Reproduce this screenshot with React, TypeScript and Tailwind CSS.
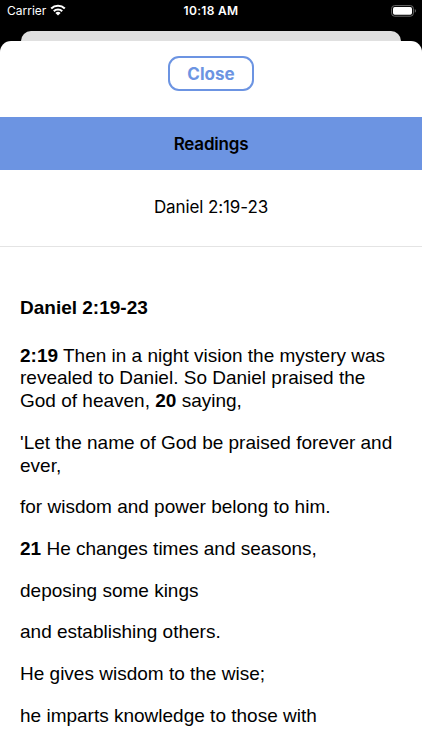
import type { ReactNode } from "react";

const verses: ReactNode[] = [
  <>
    <b>2:19</b> Then in a night vision the mystery was
    <br />
    revealed to Daniel. So Daniel praised the
    <br />
    God of heaven, <b>20</b> saying,
  </>,
  <>
    'Let the name of God be praised forever and
    <br />
    ever,
  </>,
  "for wisdom and power belong to him.",
  <>
    <b>21</b> He changes times and seasons,
  </>,
  "deposing some kings",
  "and establishing others.",
  "He gives wisdom to the wise;",
  "he imparts knowledge to those with",
];

const WifiIcon = () => (
  <svg width="16" height="12" viewBox="0 0 16 12" fill="none" stroke="white" strokeWidth="2.1">
    <path d="M1.2 4.5a9.7 9.7 0 0 1 13.6 0" />
    <path d="M3.8 7.2a6 6 0 0 1 8.4 0" />
    <path d="M8 11.6 5.4 9a3.7 3.7 0 0 1 5.2 0Z" fill="white" stroke="none" />
  </svg>
);

const BatteryIcon = () => (
  <svg width="26" height="12" viewBox="0 0 26 12" fill="none">
    <rect x="0.6" y="0.6" width="21.8" height="10.6" rx="3" stroke="#6b6b6b" strokeWidth="1" />
    <rect x="2" y="2" width="19" height="7.8" rx="1.7" fill="white" />
    <path d="M23.8 4.1c1.4.5 1.4 3.1 0 3.6Z" fill="#7b7b7b" />
  </svg>
);

const StatusBar = () => (
  <div className="grid h-[31px] grid-cols-3 items-start text-white">
    <div className="flex pl-[7px]">
      <span className="pt-[3px] text-[12px] leading-4">Carrier</span>
      <span className="ml-[4px] mt-1">
        <WifiIcon />
      </span>
    </div>
    <span className="pt-[3px] text-center text-[12px] font-semibold leading-4 tracking-[0.3px]">
      10:18 AM
    </span>
    <span className="flex justify-end pr-[5px] pt-[4.5px]">
      <BatteryIcon />
    </span>
  </div>
);

const App = () => {
  return (
    <div className="flex h-[750px] w-[422px] flex-col overflow-hidden bg-black font-['Inter',sans-serif] text-black">
      <StatusBar />
      {/* Edge of the screen behind the sheet */}
      <div className="mx-[21px] h-[10px] shrink-0 rounded-t-[10px] bg-[#e0e0e0]" />

      <div className="flex flex-1 flex-col rounded-t-[11px] bg-white">
        <div className="flex h-[76px] justify-center pt-[15px]">
          <button className="h-[35px] w-[86px] rounded-[11px] border-2 border-[#6c94e2] pt-[2px] text-[17px] font-bold text-[#6c94e2]">
            Close
          </button>
        </div>
        <h1 className="flex h-[53px] items-center justify-center bg-[#6c94e2] pt-[2px] text-[17px] font-semibold tracking-[-0.2px]">
          Readings
        </h1>
        <div className="flex h-[77px] items-center justify-center border-b border-[#e4e4e4] text-[17px] tracking-[-0.1px]">
          Daniel 2:19-23
        </div>

        <article className="px-5 pt-[50px] font-['Liberation_Sans',sans-serif] text-[19px] leading-[22.7px]">
          <h2 className="font-bold">Daniel 2:19-23</h2>
          <div className="mt-[25px] flex flex-col gap-[19px]">
            {verses.map((verse, i) => (
              <p key={i} className="whitespace-nowrap">
                {verse}
              </p>
            ))}
          </div>
        </article>
      </div>
    </div>
  );
};

export default App;
